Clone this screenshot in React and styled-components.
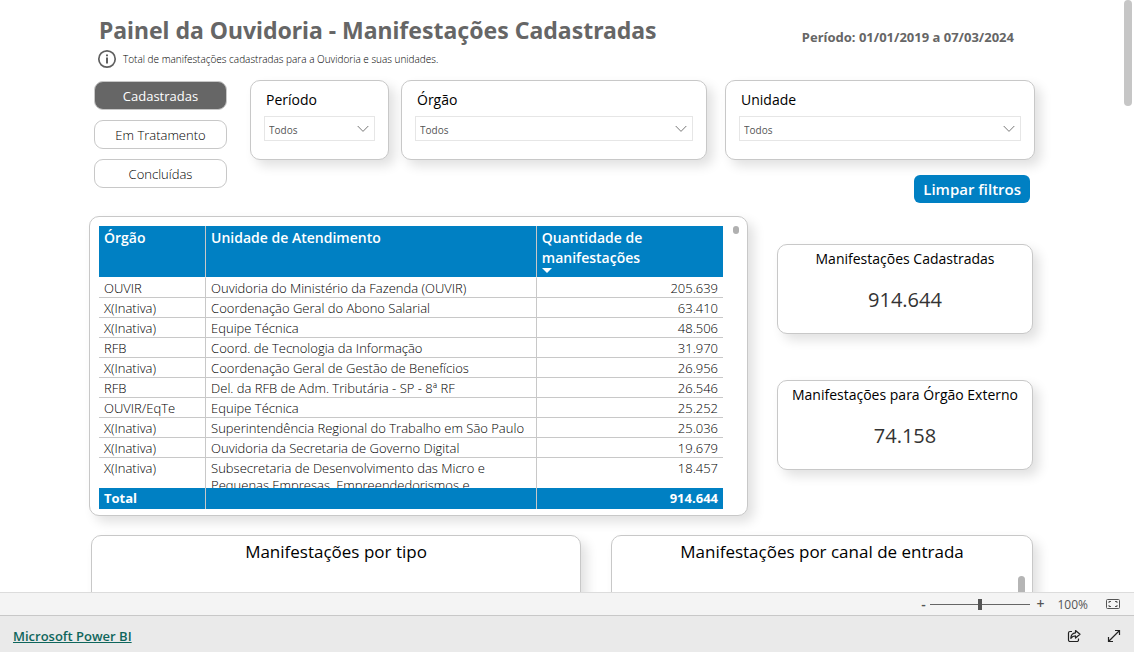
import React from "react";
import styled, { createGlobalStyle } from "styled-components";

const rows = [
  ["OUVIR", "Ouvidoria do Ministério da Fazenda (OUVIR)", "205.639"],
  ["X(Inativa)", "Coordenação Geral do Abono Salarial", "63.410"],
  ["X(Inativa)", "Equipe Técnica", "48.506"],
  ["RFB", "Coord. de Tecnologia da Informação", "31.970"],
  ["X(Inativa)", "Coordenação Geral de Gestão de Benefícios", "26.956"],
  ["RFB", "Del. da RFB de Adm. Tributária - SP - 8ª RF", "26.546"],
  ["OUVIR/EqTe", "Equipe Técnica", "25.252"],
  ["X(Inativa)", "Superintendência Regional do Trabalho em São Paulo", "25.036"],
  ["X(Inativa)", "Ouvidoria da Secretaria de Governo Digital", "19.679"],
  [
    "X(Inativa)",
    "Subsecretaria de Desenvolvimento das Micro e Pequenas Empresas, Empreendedorismos e",
    "18.457",
  ],
];

const filters = [
  { id: "periodo", label: "Período" },
  { id: "orgao", label: "Órgão" },
  { id: "unidade", label: "Unidade" },
];

const Filter = ({ id, label }) => (
  <FilterCard>
    <label htmlFor={id}>{label}</label>
    <SelectBox>
      <select id={id} defaultValue="todos">
        <option value="todos">Todos</option>
      </select>
      <svg width="12" height="8" viewBox="0 0 12 8" fill="none" stroke="#777">
        <path d="M.7 1 6 6.4 11.3 1" />
      </svg>
    </SelectBox>
  </FilterCard>
);

const Kpi = ({ title, value }) => (
  <KpiCard>
    <h2>{title}</h2>
    <p>{value}</p>
  </KpiCard>
);

const App = () => {
  return (
    <>
      <GlobalStyle />
      <Shell>
        <Report>
          <Header>
            <h1>Painel da Ouvidoria - Manifestações Cadastradas</h1>
            <Period>Período: 01/01/2019 a 07/03/2024</Period>
          </Header>
          <Info>
            <svg width="20" height="20" viewBox="0 0 20 20" fill="none">
              <circle cx="10" cy="10" r="8.2" stroke="#606060" strokeWidth="1.7" />
              <path d="M10 8.4V14.4M10 5.4V7.2" stroke="#606060" strokeWidth="2" />
            </svg>
            <p>Total de manifestações cadastradas para a Ouvidoria e suas unidades.</p>
          </Info>
          <Controls>
            <Nav>
              <NavButton $active>Cadastradas</NavButton>
              <NavButton>Em Tratamento</NavButton>
              <NavButton>Concluídas</NavButton>
            </Nav>
            <FilterArea>
              <FilterRow>
                {filters.map((filter) => (
                  <Filter key={filter.id} {...filter} />
                ))}
              </FilterRow>
              <ClearButton>Limpar filtros</ClearButton>
            </FilterArea>
          </Controls>
          <Summary>
            <TableCard>
              <TableScroll>
                <Table>
                  <thead>
                    <tr>
                      <HeadCell $width="17%">Órgão</HeadCell>
                      <HeadCell $width="53%">Unidade de Atendimento</HeadCell>
                      <HeadCell $width="30%">
                        Quantidade de manifestações
                        <SortArrow />
                      </HeadCell>
                    </tr>
                  </thead>
                  <tbody>
                    {rows.map(([orgao, unidade, total]) => (
                      <tr key={total}>
                        <td>{orgao}</td>
                        <td>{unidade}</td>
                        <td>{total}</td>
                      </tr>
                    ))}
                  </tbody>
                  <tfoot>
                    <tr>
                      <td>Total</td>
                      <td />
                      <td>914.644</td>
                    </tr>
                  </tfoot>
                </Table>
              </TableScroll>
              <TableThumb />
            </TableCard>
            <KpiColumn>
              <Kpi title="Manifestações Cadastradas" value="914.644" />
              <Kpi title="Manifestações para Órgão Externo" value="74.158" />
            </KpiColumn>
          </Summary>
          <Charts>
            <ChartCard>
              <h2>Manifestações por tipo</h2>
            </ChartCard>
            <ChartCard>
              <h2>Manifestações por canal de entrada</h2>
              <ChartThumb />
            </ChartCard>
          </Charts>
          <PageThumb />
        </Report>
        <ZoomBar>
          <ZoomButton aria-label="Reduzir">-</ZoomButton>
          <ZoomRange type="range" min="0" max="200" defaultValue="100" aria-label="Zoom" />
          <ZoomButton aria-label="Ampliar">+</ZoomButton>
          <ZoomValue>100%</ZoomValue>
          <IconButton aria-label="Ajustar à página">
            <svg width="14" height="12" viewBox="0 0 14 12" fill="none" stroke="#555">
              <rect x=".5" y="1.5" width="13" height="9" rx="1" />
              <path d="M5 3.5H3V5M9 3.5h2V5M5 8.5H3V7M9 8.5h2V7" />
            </svg>
          </IconButton>
        </ZoomBar>
        <Footer>
          <a href="#powerbi">Microsoft Power BI</a>
          <IconButton aria-label="Compartilhar">
            <svg width="14" height="14" viewBox="0 0 14 14" fill="none" stroke="#222" strokeWidth="1.2" strokeLinejoin="round">
              <path d="M5 2.5H3A1.5 1.5 0 0 0 1.5 4v7A1.5 1.5 0 0 0 3 12.5h7a1.5 1.5 0 0 0 1.5-1.5V9.5" />
              <path d="M8.5 1.5 13 5.3 8.5 9V6.8C6.5 6.8 5 7.5 3.8 9.3 4 6 5.5 4 8.5 3.8Z" />
            </svg>
          </IconButton>
          <IconButton aria-label="Tela cheia">
            <svg width="14" height="14" viewBox="0 0 14 14" fill="none" stroke="#222" strokeWidth="1.2">
              <path d="M1.5 12.5l11-11M8 1.5h4.5V6M1.5 8v4.5H6" />
            </svg>
          </IconButton>
        </Footer>
      </Shell>
    </>
  );
};

const GlobalStyle = createGlobalStyle`
  * {
    box-sizing: border-box;
  }
  body {
    margin: 0;
    background: #fff;
    color: #333;
    font-family: "Open Sans", "Noto Sans", sans-serif;
    font-size: 12px;
  }
  h1,
  h2,
  p {
    margin: 0;
    font-weight: 400;
  }
  button,
  select {
    font-family: inherit;
    cursor: pointer;
  }
  svg {
    display: block;
    flex: none;
  }
`;

const Shell = styled.div`
  height: 100vh;
  display: flex;
  flex-direction: column;
`;

const Report = styled.main`
  position: relative;
  flex: 1;
  min-height: 0;
  overflow: hidden;
  padding: 14px 99px 0 89px;
`;

const Header = styled.header`
  display: flex;
  justify-content: space-between;
  padding: 0 21px 0 10px;
  color: #666;
  font-family: "Noto Sans", sans-serif;
  h1 {
    font-size: 23px;
    font-weight: 700;
    line-height: 32px;
    white-space: nowrap;
  }
`;

const Period = styled.p`
  padding-top: 14px;
  font-size: 13px;
  line-height: 18px;
  && {
    font-weight: 700;
  }
`;

const Info = styled.div`
  display: flex;
  align-items: center;
  gap: 6px;
  height: 26px;
  padding-left: 8px;
  p {
    color: #000;
    font-size: 10px;
    font-weight: 300;
  }
`;

const Controls = styled.section`
  display: flex;
  gap: 23px;
  padding: 8px 0 0 5px;
`;

const Nav = styled.nav`
  flex: none;
  display: flex;
  flex-direction: column;
  gap: 10px;
  width: 133px;
  padding-top: 1px;
`;

const NavButton = styled.button`
  height: 29px;
  padding: 0;
  border: 1px solid #c8c8c8;
  border-radius: 9px;
  background: ${({ $active }) => ($active ? "#666" : "#fff")};
  color: ${({ $active }) => ($active ? "#fff" : "#000")};
  font-size: 13px;
  font-weight: ${({ $active }) => ($active ? 400 : 300)};
`;

const FilterArea = styled.div`
  flex: 1;
  display: flex;
  flex-direction: column;
  align-items: flex-end;
  gap: 15px;
`;

const FilterRow = styled.div`
  align-self: stretch;
  display: grid;
  grid-template-columns: 139fr 306fr 316fr;
  gap: 12px;
`;

const Card = styled.section`
  border: 1px solid #c8c8c8;
  border-radius: 10px;
  background: #fff;
  box-shadow: 6px 6px 12px rgba(0, 0, 0, 0.12);
`;

const FilterCard = styled(Card)`
  height: 80px;
  padding: 9px 13px;
  &:last-child {
    margin-left: 6px;
  }
  label {
    display: block;
    padding: 0 2px;
    color: #000;
    font-size: 14px;
    font-weight: 500;
    line-height: 20px;
  }
`;

const SelectBox = styled.div`
  display: flex;
  align-items: center;
  margin-top: 6px;
  padding-right: 5px;
  border: 1px solid #e6e6e6;
  select {
    flex: 1;
    min-width: 0;
    height: 23px;
    padding: 2px 4px 0;
    border: 0;
    appearance: none;
    background: none;
    color: #555;
    font-size: 10px;
  }
  svg {
    pointer-events: none;
  }
`;

const ClearButton = styled.button`
  height: 28px;
  margin-right: 5px;
  padding: 0 9px;
  border: 0;
  border-radius: 6px;
  background: #0080c3;
  color: #fff;
  font-size: 15px;
  font-weight: 600;
`;

const Summary = styled.section`
  display: grid;
  grid-template-columns: 659fr 256fr;
  gap: 29px;
  padding: 13px 2px 0 0;
`;

const TableCard = styled(Card)`
  display: flex;
  align-items: flex-start;
  gap: 10px;
  height: 300px;
  padding: 9px 8px 6px 9px;
`;

const TableScroll = styled.div`
  flex: 1;
  height: 283px;
  overflow: auto;
  scrollbar-width: none;
`;

const Table = styled.table`
  width: 100%;
  table-layout: fixed;
  border-collapse: separate;
  border-spacing: 0;
  th,
  td {
    padding: 2px 5px 0;
    border-bottom: 1px solid #c8c8c8;
    line-height: 17px;
    text-align: left;
    vertical-align: top;
  }
  th + th,
  td + td {
    border-left: 1px solid #c8c8c8;
  }
  td:last-child {
    text-align: right;
  }
  td {
    color: #000;
    font-size: 13px;
    font-weight: 300;
  }
  tfoot td {
    position: sticky;
    bottom: 0;
    height: 21px;
    border-bottom: 0;
    background: #0080c3;
    color: #fff;
    font-weight: 700;
  }
`;

const HeadCell = styled.th`
  && {
    position: sticky;
    top: 0;
    width: ${({ $width }) => $width};
    height: 52px;
    border-bottom-color: #fff;
    background: #0080c3;
    background-clip: padding-box;
    color: #fff;
    font-size: 14px;
    font-weight: 600;
    line-height: 20px;
  }
`;

const SortArrow = styled.span`
  display: block;
  width: 0;
  border: 5px solid transparent;
  border-top-color: #fff;
  border-bottom: 0;
`;

const TableThumb = styled.span`
  width: 6px;
  height: 8px;
  border-radius: 3px;
  background: #b0b0b0;
`;

const KpiColumn = styled.div`
  display: flex;
  flex-direction: column;
  gap: 46px;
  padding-top: 28px;
`;

const KpiCard = styled(Card)`
  height: 90px;
  padding-top: 4px;
  text-align: center;
  h2 {
    color: #000;
    font-size: 14px;
    line-height: 20px;
    white-space: nowrap;
  }
  p {
    padding-top: 17px;
    font-size: 20px;
    font-weight: 500;
    line-height: 28px;
  }
`;

const Charts = styled.section`
  display: grid;
  grid-template-columns: 490fr 422fr;
  gap: 30px;
  padding: 19px 2px 0;
`;

const ChartCard = styled(Card)`
  position: relative;
  height: 240px;
  padding-top: 4px;
  h2 {
    color: #000;
    font-size: 17px;
    line-height: 24px;
    text-align: center;
  }
`;

const ChartThumb = styled.span`
  position: absolute;
  top: 40px;
  right: 7px;
  width: 7px;
  height: 90px;
  border-radius: 4px;
  background: #b5b5b5;
`;

const PageThumb = styled.span`
  position: absolute;
  top: 0;
  right: 2px;
  width: 8px;
  height: 106px;
  border-radius: 4px;
  background: #c6c6c6;
`;

const ZoomBar = styled.div`
  flex: none;
  display: flex;
  align-items: center;
  justify-content: flex-end;
  height: 23px;
  padding-right: 14px;
  border-top: 1px solid #dcdcdc;
  background: #f4f4f4;
  color: #555;
`;

const ZoomButton = styled.button`
  width: 14px;
  padding: 0;
  border: 0;
  background: none;
  color: #555;
  font-size: 14px;
  font-weight: 600;
  line-height: 20px;
`;

const ZoomRange = styled.input`
  width: 100px;
  height: 12px;
  margin: 0 3px 0 0;
  appearance: none;
  background: linear-gradient(#666, #666) center / 100% 1px no-repeat;
  &::-webkit-slider-thumb {
    appearance: none;
    width: 4px;
    height: 11px;
    background: #555;
  }
`;

const ZoomValue = styled.span`
  margin: 0 18px 0 10px;
`;

const IconButton = styled.button`
  padding: 0;
  border: 0;
  background: none;
`;

const Footer = styled.footer`
  flex: none;
  display: flex;
  align-items: center;
  gap: 26px;
  height: 37px;
  padding: 3px 13px 0;
  border-top: 1px solid #c8c8c8;
  background: #eaeaea;
  a {
    margin-right: auto;
    color: #0f665c;
    font-size: 13px;
    font-weight: 600;
  }
`;

export default App;
